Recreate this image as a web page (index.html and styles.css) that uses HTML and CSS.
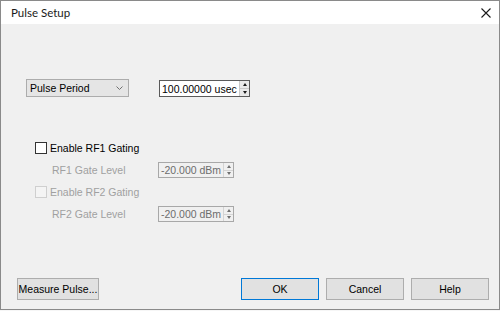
FILE: index.html
```html
<!DOCTYPE html>
<html lang="en">
<head>
    <meta charset="UTF-8">
    <title>Pulse Setup</title>
    <link rel="stylesheet" href="styles.css">
</head>
<body>
    <div class="window">
        <div class="titlebar">
            <span class="title">Pulse Setup</span>
            <svg class="close" width="10" height="10" viewBox="0 0 10 10">
                <path d="M0.5 0.5 L9.5 9.5 M9.5 0.5 L0.5 9.5" stroke="#1a1a1a" stroke-width="1.1" fill="none"/>
            </svg>
        </div>

        <div class="content">
            <div class="top-row">
                <div class="combo">
                    <span>Pulse Period</span>
                    <svg class="chevron" width="7" height="4" viewBox="0 0 7 4">
                        <path d="M0.5 0.5 L3.5 3.5 L6.5 0.5" stroke="#707070" fill="none"/>
                    </svg>
                </div>
                <div class="spin spin-main">
                    <span class="spin-text">100.00000 usec</span>
                    <div class="spin-btns">
                        <span class="arrow up"></span>
                        <span class="arrow down"></span>
                    </div>
                </div>
            </div>

            <div class="gating">
                <label class="check-row">
                    <span class="box"></span>
                    <span>Enable RF1 Gating</span>
                </label>
                <div class="level-row">
                    <span class="level-label">RF1 Gate Level</span>
                    <div class="spin spin-off">
                        <span class="spin-text">-20.000 dBm</span>
                        <div class="spin-btns">
                            <span class="arrow up"></span>
                            <span class="arrow down"></span>
                        </div>
                    </div>
                </div>
                <label class="check-row disabled">
                    <span class="box"></span>
                    <span>Enable RF2 Gating</span>
                </label>
                <div class="level-row">
                    <span class="level-label">RF2 Gate Level</span>
                    <div class="spin spin-off">
                        <span class="spin-text">-20.000 dBm</span>
                        <div class="spin-btns">
                            <span class="arrow up"></span>
                            <span class="arrow down"></span>
                        </div>
                    </div>
                </div>
            </div>

            <div class="footer">
                <button class="btn btn-measure">Measure Pulse...</button>
                <div class="actions">
                    <button class="btn btn-ok">OK</button>
                    <button class="btn">Cancel</button>
                    <button class="btn">Help</button>
                </div>
            </div>
        </div>
    </div>
</body>
</html>
```

FILE: styles.css
```css
* {
    margin: 0;
    padding: 0;
    box-sizing: border-box;
}

body {
    background: #f6f6f6;
    font-family: 'Liberation Sans', Arial, sans-serif;
    font-size: 10.5px;
    color: #000;
}

.window {
    width: 500px;
    height: 310px;
    border: 1px solid #8a8a8a;
    background: #f0f0f0;
    display: flex;
    flex-direction: column;
}

.titlebar {
    height: 23px;
    background: #fff;
    display: flex;
    align-items: center;
    justify-content: space-between;
    padding: 0 8px 0 10px;
}

.title {
    font-family: 'Lato', 'Noto Sans', sans-serif;
    font-size: 11.5px;
    color: #1a1a1a;
}

.content {
    flex: 1;
    display: flex;
    flex-direction: column;
}

.top-row {
    display: flex;
    align-items: flex-start;
    gap: 30px;
    margin: 55px 0 0 25px;
}

.combo {
    width: 103px;
    height: 18px;
    background: #e5e5e5;
    border: 1px solid #acacac;
    display: flex;
    align-items: center;
    justify-content: space-between;
    padding: 0 5px 0 3px;
}

.spin {
    display: flex;
    height: 16px;
    background: #fff;
    border: 1px solid #7a7a7a;
}

.spin-main {
    width: 91px;
    height: 17px;
    margin-top: 1px;
    border-color: #5a5a5a;
}

.spin-text {
    flex: 1;
    display: flex;
    align-items: center;
    padding-left: 2px;
    white-space: nowrap;
    overflow: hidden;
}

.spin-btns {
    width: 10px;
    display: flex;
    flex-direction: column;
    background: #e8e8e8;
    border-left: 1px solid #c8c8c8;
}

.arrow {
    flex: 1;
    display: flex;
    align-items: center;
    justify-content: center;
}

.arrow.up {
    border-bottom: 1px solid #c8c8c8;
}

.arrow::before {
    content: '';
    border-left: 2.5px solid transparent;
    border-right: 2.5px solid transparent;
}

.arrow.up::before {
    border-bottom: 3px solid #1a1a1a;
}

.arrow.down::before {
    border-top: 3px solid #1a1a1a;
}

.gating {
    margin: 43px 0 0 34px;
    display: flex;
    flex-direction: column;
    gap: 6px;
}

.check-row {
    height: 16px;
    display: flex;
    align-items: center;
    gap: 3px;
}

.box {
    width: 12px;
    height: 12px;
    border: 1px solid #333;
    background: #fff;
}

.check-row.disabled {
    color: #a0a0a0;
}

.check-row.disabled .box {
    border-color: #cfcfcf;
    background: #f4f4f4;
}

.level-row {
    height: 16px;
    display: flex;
    align-items: center;
}

.level-label {
    width: 123px;
    padding-left: 17px;
    color: #a0a0a0;
}

.spin-off {
    width: 76px;
    background: #f0f0f0;
    border-color: #a8a8a8;
    color: #6d6d6d;
}

.spin-off .spin-btns {
    background: #f0f0f0;
    border-left-color: #d4d4d4;
}

.spin-off .arrow.up {
    border-bottom-color: #d4d4d4;
}

.spin-off .arrow.up::before {
    border-bottom-color: #707070;
}

.spin-off .arrow.down::before {
    border-top-color: #707070;
}

.footer {
    margin-top: auto;
    margin-bottom: 9px;
    padding: 0 10px 0 16px;
    display: flex;
    justify-content: space-between;
}

.actions {
    display: flex;
    gap: 7px;
}

.btn {
    width: 78px;
    height: 22px;
    background: #e1e1e1;
    border: 1px solid #adadad;
    font-family: inherit;
    font-size: 10.5px;
    color: #000;
}

.btn-measure {
    width: 82px;
}

.btn-ok {
    border-color: #0078d7;
}
```
